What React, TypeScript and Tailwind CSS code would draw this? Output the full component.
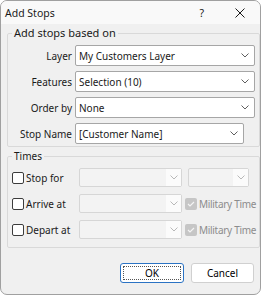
import React from "react";

const font = { fontFamily: '"Noto Sans", "Open Sans", sans-serif' };

function Chevron({ disabled }: { disabled?: boolean }) {
  return (
    <svg width="8" height="5" viewBox="0 0 8 5" className="shrink-0">
      <path
        d="M0.5 0.5 L4 4 L7.5 0.5"
        fill="none"
        stroke={disabled ? "#b8b8b8" : "#5f5f5f"}
        strokeWidth="1"
      />
    </svg>
  );
}

function Combo({ value, className = "" }: { value: string; className?: string }) {
  return (
    <div
      className={`flex h-[21px] items-center justify-between rounded-[2px] border border-[#a6a6a6] bg-white pl-[3px] pr-[5px] ${className}`}
    >
      <span className="whitespace-nowrap text-[#1a1a1a]">{value}</span>
      <Chevron />
    </div>
  );
}

function DisabledCombo({ className = "" }: { className?: string }) {
  return (
    <div
      className={`flex h-[19px] items-stretch rounded-[2px] border border-[#d6d6d6] bg-[#f3f3f3] ${className}`}
    >
      <div className="flex-1" />
      <div className="flex w-[15px] items-center justify-center bg-[#fbfbfb]">
        <Chevron disabled />
      </div>
    </div>
  );
}

function CheckBox() {
  return <div className="h-[12px] w-[12px] shrink-0 rounded-[2px] border border-[#3c3c3c] bg-white" />;
}

function DisabledCheck() {
  return (
    <div className="flex h-[12px] w-[12px] shrink-0 items-center justify-center rounded-[2px] bg-[#c6c6c6]">
      <svg width="8" height="6" viewBox="0 0 8 6">
        <path d="M1 3 L3 5 L7 1" fill="none" stroke="#f4f4f4" strokeWidth="1.2" />
      </svg>
    </div>
  );
}

function Row({ label, children }: { label: string; children: React.ReactNode }) {
  return (
    <div className="flex items-center">
      <div className="w-[67px] pr-[3px] text-right text-[#1a1a1a]">{label}</div>
      {children}
    </div>
  );
}

function TimeRow({ label, second }: { label: string; second: "combo" | "military" }) {
  return (
    <div className="flex items-center">
      <div className="flex w-[71px] items-center gap-[2px] pl-[4px]">
        <CheckBox />
        <span className="text-[#1a1a1a]">{label}</span>
      </div>
      <DisabledCombo className="w-[103px]" />
      {second === "combo" ? (
        <DisabledCombo className="ml-[6px] w-[61px]" />
      ) : (
        <div className="ml-[3px] flex items-center gap-[2px]">
          <DisabledCheck />
          <span className="whitespace-nowrap tracking-[-0.3px] text-[#8c8c8c]">Military Time</span>
        </div>
      )}
    </div>
  );
}

export default function App() {
  return (
    <div className="h-[296px] w-[262px] bg-white text-[10px] leading-[14px]" style={font}>
      <div className="flex h-[295px] w-[261px] flex-col overflow-hidden rounded-[7px] border border-[#a0a0a0] bg-[#f0f0f0]">
        <div className="flex h-[23px] shrink-0 items-center bg-[#f9f9f9] pl-[4px] text-[10.5px] text-[#1a1a1a]">
          <span>Add Stops</span>
          <span className="ml-auto mr-[31px]">?</span>
          <svg width="10" height="10" viewBox="0 0 10 10" className="mr-[15px]">
            <path d="M0.5 0.5 L9.5 9.5 M9.5 0.5 L0.5 9.5" stroke="#1a1a1a" strokeWidth="1" />
          </svg>
        </div>

        <div className="flex flex-1 flex-col pl-[6px] pt-[2px]">
          <fieldset className="rounded-[2px] border border-[#d9d9d9] pb-[2px] pt-[5px]">
            <legend className="ml-[4px] px-[2px] text-[11px] text-[#1a1a1a]">Add stops based on</legend>
            <div className="flex flex-col gap-[5px]">
              <Row label="Layer">
                <Combo value="My Customers Layer" className="w-[180px]" />
              </Row>
              <Row label="Features">
                <Combo value="Selection (10)" className="w-[180px]" />
              </Row>
              <Row label="Order by">
                <Combo value="None" className="w-[180px]" />
              </Row>
              <Row label="Stop Name">
                <Combo value="[Customer Name]" className="w-[169px]" />
              </Row>
            </div>
          </fieldset>

          <fieldset className="mt-[2px] rounded-[2px] border border-[#d9d9d9] pb-[8px] pt-[5px]">
            <legend className="ml-[4px] px-[2px] text-[#1a1a1a]">Times</legend>
            <div className="flex flex-col gap-[7px]">
              <TimeRow label="Stop for" second="combo" />
              <TimeRow label="Arrive at" second="military" />
              <TimeRow label="Depart at" second="military" />
            </div>
          </fieldset>

          <div className="mt-auto mb-[11px] flex justify-end gap-[7px] pr-[6px]">
            <button className="flex h-[20px] w-[64px] items-center justify-center rounded-[3px] border border-[#2b73c4] bg-white p-[2px]">
              <span className="flex h-full w-full items-center justify-center border border-dotted border-[#555]">
                OK
              </span>
            </button>
            <button className="h-[20px] w-[63px] rounded-[3px] border border-[#d0d0d0] bg-white">Cancel</button>
          </div>
        </div>
      </div>
    </div>
  );
}
